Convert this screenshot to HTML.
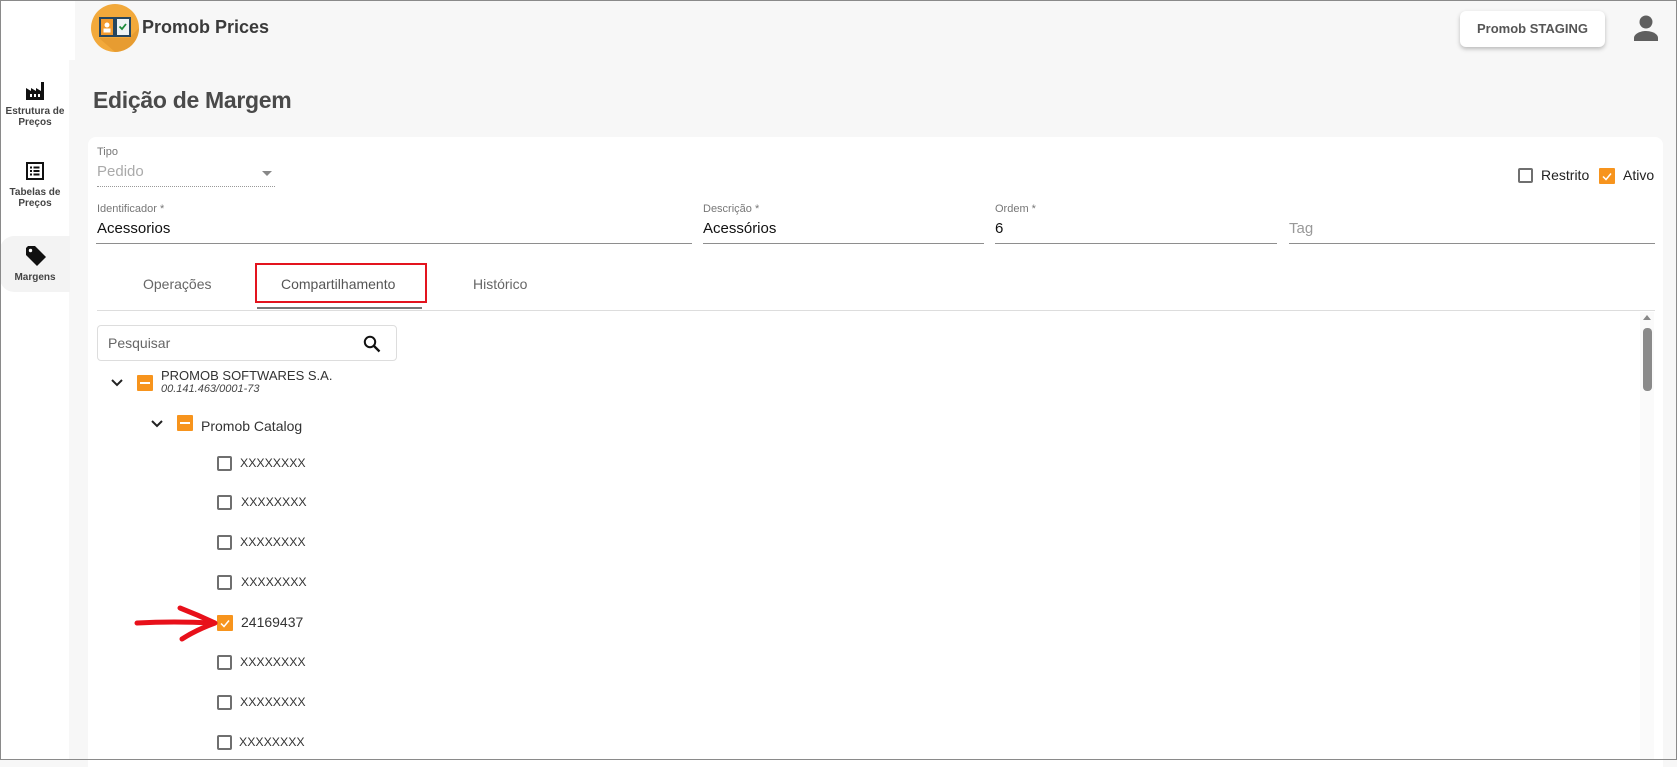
<!DOCTYPE html>
<html><head><meta charset="utf-8">
<style>
*{margin:0;padding:0;box-sizing:border-box}
body{width:1677px;height:760px;overflow:hidden;background:#f7f7f7;font-family:"Liberation Sans",Arial,sans-serif;position:relative;color:#222}
.a{position:absolute}
.frame{left:0;top:0;width:1677px;height:760px;border:1px solid #8a8a8a;z-index:50;pointer-events:none}
.lbl{font-size:11px;color:#777}
.val{font-size:15px;color:#111}
.line{height:1px;background:#8e8e8e}
.cb{width:15px;height:15px;border:2px solid #6f6f6f;border-radius:2px;background:#fff}
.cbo{width:16px;height:16px;background:#f7941d;border-radius:1px}
.item{font-size:12.3px;color:#333}
.side{font-size:10px;font-weight:bold;color:#444;text-align:center;width:70px;line-height:11px}
</style></head><body>
<div class="a frame"></div>
<div class="a" style="left:0;top:0;width:75px;height:60px;background:#fff"></div>
<div class="a" style="left:0;top:0;width:69px;height:760px;background:#fff"></div>
<div class="a" style="left:0;top:236px;width:70px;height:56px;background:#f3f3f3;border-radius:14px 0 0 14px"></div>

<svg class="a" style="left:25px;top:80px" width="22" height="20" viewBox="0 0 22 20"><path d="M1 20V8l5 3V8l5 3V8l5 3V2h3v18z" fill="#111"/><rect x="5" y="14" width="2" height="3" fill="#fff"/><rect x="9" y="14" width="2" height="3" fill="#fff"/><rect x="13" y="14" width="2" height="3" fill="#fff"/></svg>
<div class="a side" style="left:0;top:106px">Estrutura de<br>Preços</div>
<svg class="a" style="left:26px;top:162px" width="18" height="18" viewBox="0 0 18 18"><rect x="1" y="1" width="16" height="16" fill="none" stroke="#111" stroke-width="2"/><rect x="4" y="4.5" width="2" height="2" fill="#111"/><rect x="7.5" y="4.5" width="6" height="2" fill="#111"/><rect x="4" y="8" width="2" height="2" fill="#111"/><rect x="7.5" y="8" width="6" height="2" fill="#111"/><rect x="4" y="11.5" width="2" height="2" fill="#111"/><rect x="7.5" y="11.5" width="6" height="2" fill="#111"/></svg>
<div class="a side" style="left:0;top:187px">Tabelas de<br>Preços</div>
<svg class="a" style="left:25px;top:245px" width="22" height="22" viewBox="0 0 22 22"><path d="M1 3V10l11 11 9-9L10 1H3z" fill="#111"/><circle cx="5.5" cy="5.5" r="1.7" fill="#fff"/></svg>
<div class="a side" style="left:0;top:272px">Margens</div>

<svg class="a" style="left:91px;top:4px" width="48" height="48" viewBox="0 0 48 48"><circle cx="24" cy="24" r="24" fill="#f2a93b"/><path d="M24 48A24 24 0 0 0 48 24L38 34H8z" fill="#e0952c" opacity=".6"/><rect x="8" y="13" width="32" height="20" fill="#26465f"/><rect x="10" y="15" width="12" height="16" fill="#f29a2e"/><rect x="26" y="15" width="12" height="16" fill="#eef3f5"/><circle cx="16" cy="21" r="2.5" fill="#fff"/><rect x="12.5" y="24.5" width="7" height="4" fill="#fff"/><path d="M28.5 22.5l2.5 2.5 4-5" stroke="#1a8a3a" stroke-width="1.8" fill="none"/></svg>
<div class="a" style="left:142px;top:17px;font-size:18px;font-weight:bold;color:#3a3a3a">Promob Prices</div>

<div class="a" style="left:1460px;top:11px;width:145px;height:36px;background:#fff;border-radius:6px;box-shadow:0 2px 4px rgba(0,0,0,.25);font-size:13px;font-weight:bold;color:#555;text-align:center;line-height:36px">Promob STAGING</div>
<svg class="a" style="left:1634px;top:15px" width="24" height="26" viewBox="0 0 24 26"><circle cx="12" cy="7" r="6.5" fill="#5f5f5f"/><path d="M0 26v-3c0-4 6-7 12-7s12 3 12 7v3z" fill="#5f5f5f"/></svg>

<div class="a" style="left:93px;top:87px;font-size:23px;font-weight:bold;color:#4a4a4a;letter-spacing:-0.3px">Edição de Margem</div>

<div class="a" style="left:88px;top:137px;width:1575px;height:630px;background:#fff;border-radius:8px 8px 0 0"></div>

<div class="a lbl" style="left:97px;top:146px">Tipo</div>
<div class="a" style="left:97px;top:163px;font-size:15px;color:#aaa">Pedido</div>
<div class="a" style="left:262px;top:171px;width:0;height:0;border-left:5px solid transparent;border-right:5px solid transparent;border-top:5px solid #888"></div>
<div class="a" style="left:97px;top:186px;width:178px;border-top:1px dotted #999"></div>

<div class="a cb" style="left:1518px;top:168px"></div>
<div class="a" style="left:1541px;top:167px;font-size:14px">Restrito</div>
<div class="a cbo" style="left:1599px;top:168px"><svg width="16" height="16"><path d="M4 8.5l3 3 5-6" stroke="#fff" stroke-width="1.5" fill="none"/></svg></div>
<div class="a" style="left:1623px;top:167px;font-size:14px">Ativo</div>

<div class="a lbl" style="left:97px;top:203px">Identificador *</div>
<div class="a val" style="left:97px;top:220px">Acessorios</div>
<div class="a line" style="left:96px;top:243px;width:596px"></div>
<div class="a lbl" style="left:703px;top:203px">Descrição *</div>
<div class="a val" style="left:703px;top:220px">Acessórios</div>
<div class="a line" style="left:703px;top:243px;width:281px"></div>
<div class="a lbl" style="left:995px;top:203px">Ordem *</div>
<div class="a val" style="left:995px;top:220px">6</div>
<div class="a line" style="left:995px;top:243px;width:282px"></div>
<div class="a" style="left:1289px;top:220px;font-size:15px;color:#999">Tag</div>
<div class="a line" style="left:1289px;top:243px;width:366px"></div>

<div class="a" style="left:143px;top:276px;font-size:14px;color:#666">Operações</div>
<div class="a" style="left:281px;top:276px;font-size:14px;color:#555">Compartilhamento</div>
<div class="a" style="left:473px;top:276px;font-size:14px;color:#666">Histórico</div>
<div class="a" style="left:255px;top:263px;width:172px;height:40px;border:2px solid #e3141e"></div>
<div class="a" style="left:257px;top:307px;width:165px;height:2px;background:#777"></div>
<div class="a" style="left:97px;top:310px;width:1558px;height:1px;background:#ddd"></div>

<div class="a" style="left:97px;top:325px;width:300px;height:36px;border:1px solid #ddd;border-radius:4px"></div>
<div class="a" style="left:108px;top:335px;font-size:14px;color:#666">Pesquisar</div>
<svg class="a" style="left:363px;top:335px" width="18" height="18" viewBox="0 0 18 18"><circle cx="7" cy="7" r="5.2" fill="none" stroke="#111" stroke-width="2"/><path d="M11 11l5.5 5.5" stroke="#111" stroke-width="2.3"/></svg>

<svg class="a" style="left:111px;top:379px" width="12" height="8"><path d="M1 1l5 5 5-5" stroke="#222" stroke-width="2" fill="none"/></svg>
<div class="a cbo" style="left:137px;top:375px"><div style="margin:7px 3px;width:10px;height:2px;background:#fff"></div></div>
<div class="a" style="left:161px;top:368px;font-size:13px;color:#333">PROMOB SOFTWARES S.A.</div>
<div class="a" style="left:161px;top:383px;font-size:11px;font-style:italic;color:#444">00.141.463/0001-73</div>

<svg class="a" style="left:151px;top:420px" width="12" height="8"><path d="M1 1l5 5 5-5" stroke="#222" stroke-width="2" fill="none"/></svg>
<div class="a cbo" style="left:177px;top:415px"><div style="margin:7px 3px;width:10px;height:2px;background:#fff"></div></div>
<div class="a" style="left:201px;top:418px;font-size:14px;color:#333">Promob Catalog</div>

<div class="a cb" style="left:217px;top:456px"></div><div class="a item" style="left:240px;top:456px">XXXXXXXX</div>
<div class="a cb" style="left:217px;top:495px"></div><div class="a item" style="left:241px;top:495px">XXXXXXXX</div>
<div class="a cb" style="left:217px;top:535px"></div><div class="a item" style="left:240px;top:535px">XXXXXXXX</div>
<div class="a cb" style="left:217px;top:575px"></div><div class="a item" style="left:241px;top:575px">XXXXXXXX</div>
<div class="a cbo" style="left:217px;top:615px"><svg width="16" height="16"><path d="M4 8.5l3 3 5-6" stroke="#fff" stroke-width="1.5" fill="none"/></svg></div><div class="a" style="left:241px;top:614px;font-size:14px;color:#333">24169437</div>
<div class="a cb" style="left:217px;top:655px"></div><div class="a item" style="left:240px;top:655px">XXXXXXXX</div>
<div class="a cb" style="left:217px;top:695px"></div><div class="a item" style="left:240px;top:695px">XXXXXXXX</div>
<div class="a cb" style="left:217px;top:735px"></div><div class="a item" style="left:239px;top:735px">XXXXXXXX</div>

<svg class="a" style="left:134px;top:604px" width="86" height="38" viewBox="0 0 86 38"><path d="M3 19Q40 17 78 19" stroke="#e8101a" stroke-width="5" stroke-linecap="round" fill="none"/><path d="M46 4Q64 11 81 19Q62 26 48 35" stroke="#e8101a" stroke-width="5" fill="none" stroke-linecap="round" stroke-linejoin="round"/></svg>

<div class="a" style="left:1640px;top:312px;width:14px;height:448px;background:#fafafa"></div>
<div class="a" style="left:1643px;top:315px;width:0;height:0;border-left:4px solid transparent;border-right:4px solid transparent;border-bottom:5px solid #888"></div>
<div class="a" style="left:1643px;top:328px;width:9px;height:63px;background:#8a8a8a;border-radius:4px"></div>
</body></html>
